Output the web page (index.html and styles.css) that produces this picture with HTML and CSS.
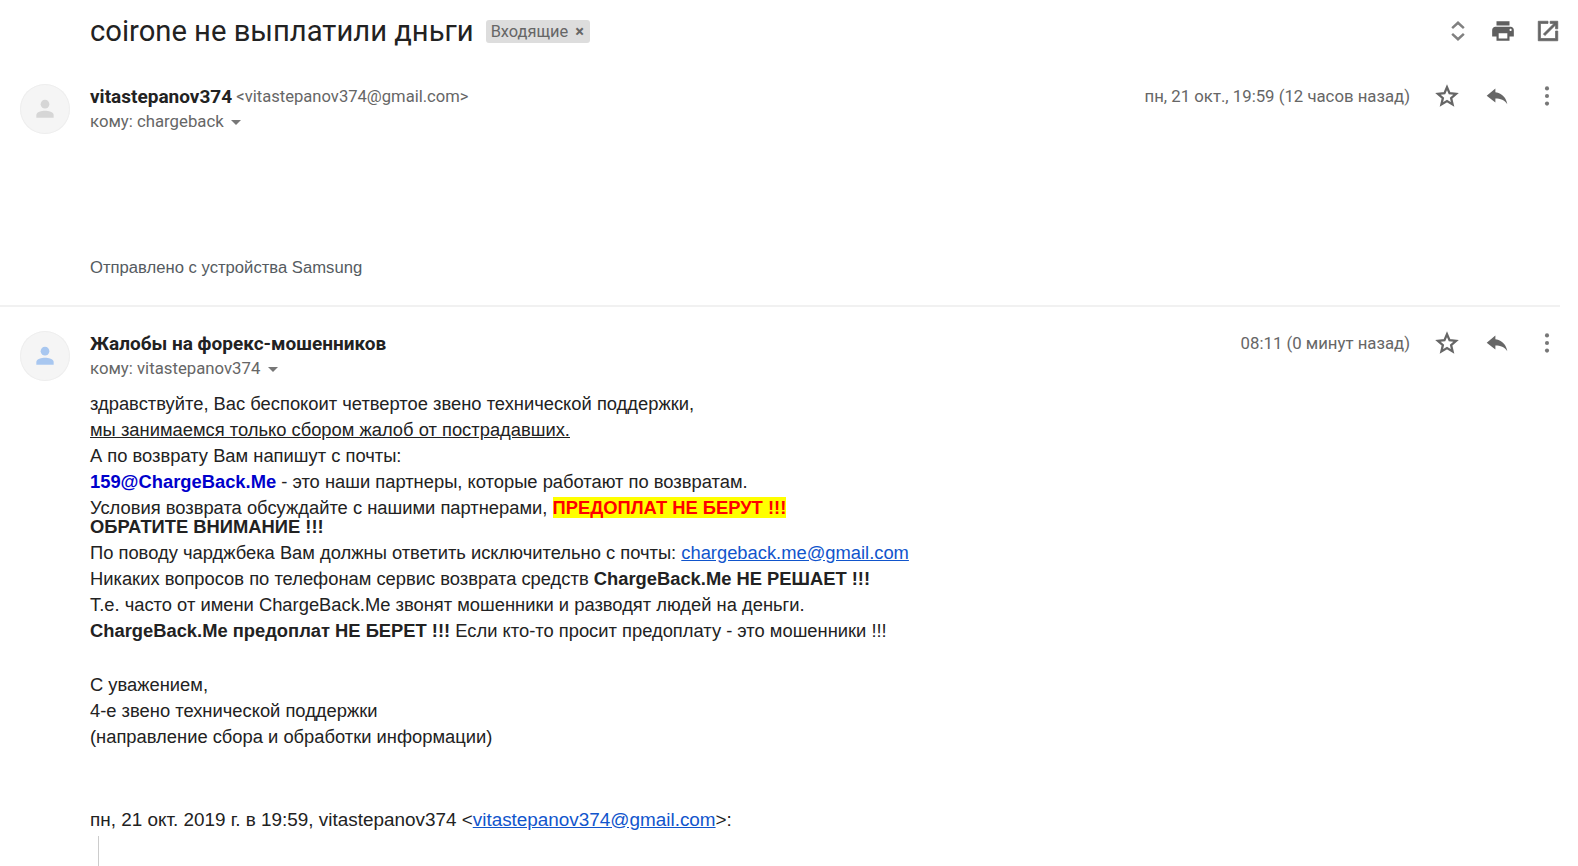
FILE: index.html
```html
<!DOCTYPE html>
<html lang="ru">
<head>
<meta charset="utf-8">
<title>coirone не выплатили дньги</title>
<link rel="stylesheet" href="styles.css">
</head>
<body>
<header class="subject-row">
  <div class="subject-main">
    <h1 class="subject">coirone не выплатили дньги</h1>
    <span class="label">Входящие <span class="label-x">×</span></span>
  </div>
  <div class="subject-actions">
    <svg class="icon" viewBox="0 0 24 24"><path d="M6.6 9.4 12 4.4l5.4 5M6.6 14.6l5.4 5 5.4-5" fill="none" stroke="#808080" stroke-width="2.3"/></svg>
    <svg class="icon" viewBox="0 0 24 24"><path fill="#5f5f5f" d="M19 8H5c-1.66 0-3 1.34-3 3v6h4v4h12v-4h4v-6c0-1.66-1.34-3-3-3zm-3 11H8v-5h8v5zm3-7c-.55 0-1-.45-1-1s.45-1 1-1 1 .45 1 1-.45 1-1 1zm-1-9H6v4h12V3z"/></svg>
    <svg class="icon" viewBox="0 0 24 24"><path fill="#666" stroke="#666" stroke-width=".7" d="M19 19H5V5h7V3H3v18h18v-9h-2v7zM14 3v2h3.59l-9.83 9.83 1.41 1.41L19 6.41V10h2V3h-7z"/></svg>
  </div>
</header>

<article class="message first">
  <div class="avatar">
    <svg viewBox="0 0 24 24"><circle cx="12" cy="7.5" r="4" fill="#d6d6d6"/><path fill="#d6d6d6" d="M4 20v-2.5C4 14.5 9 13.5 12 13.5s8 1 8 4V20z"/></svg>
  </div>
  <div class="message-main">
    <div class="meta">
      <div class="people">
        <div class="from"><strong class="name">vitastepanov374</strong> <span class="addr">&lt;vitastepanov374@gmail.com&gt;</span></div>
        <div class="to">кому: chargeback <span class="caret"></span></div>
      </div>
      <div class="date-actions">
        <span class="date">пн, 21 окт., 19:59 (12 часов назад)</span>
        <svg class="icon" viewBox="0 0 24 24"><path fill="none" stroke="#666" stroke-width="2.1" d="M12 3.9l2.35 5.55 6 .52-4.55 3.95 1.36 5.87L12 16.68l-5.16 3.11 1.36-5.87-4.55-3.95 6-.52z"/></svg>
        <svg class="icon" viewBox="0 0 24 24"><path fill="#666" d="M10.5 8.6V5L2.5 11.7l8 6.3v-3.7c4.700 0 8.500 1.500 11 5.200-.9-5.200-4.300-10-11-10.900z"/></svg>
        <svg class="icon" viewBox="0 0 24 24"><circle cx="12" cy="5" r="1.9" fill="#777"/><circle cx="12" cy="12" r="1.9" fill="#777"/><circle cx="12" cy="19" r="1.9" fill="#777"/></svg>
      </div>
    </div>
    <p class="signature">Отправлено с устройства Samsung</p>
  </div>
</article>

<article class="message second">
  <div class="avatar">
    <svg viewBox="0 0 24 24"><circle cx="12" cy="7.5" r="4" fill="#a8c7f0"/><path fill="#a8c7f0" d="M4 20v-2.5C4 14.5 9 13.5 12 13.5s8 1 8 4V20z"/></svg>
  </div>
  <div class="message-main">
    <div class="meta">
      <div class="people">
        <div class="from"><strong class="name">Жалобы на форекс-мошенников</strong></div>
        <div class="to">кому: vitastepanov374 <span class="caret"></span></div>
      </div>
      <div class="date-actions">
        <span class="date">08:11 (0 минут назад)</span>
        <svg class="icon" viewBox="0 0 24 24"><path fill="none" stroke="#666" stroke-width="2.1" d="M12 3.9l2.35 5.55 6 .52-4.55 3.95 1.36 5.87L12 16.68l-5.16 3.11 1.36-5.87-4.55-3.95 6-.52z"/></svg>
        <svg class="icon" viewBox="0 0 24 24"><path fill="#666" d="M10.5 8.6V5L2.5 11.7l8 6.3v-3.7c4.700 0 8.500 1.500 11 5.200-.9-5.200-4.300-10-11-10.900z"/></svg>
        <svg class="icon" viewBox="0 0 24 24"><circle cx="12" cy="5" r="1.9" fill="#777"/><circle cx="12" cy="12" r="1.9" fill="#777"/><circle cx="12" cy="19" r="1.9" fill="#777"/></svg>
      </div>
    </div>
    <div class="body">
      <div class="line">здравствуйте, Вас беспокоит четвертое звено технической поддержки,</div>
      <div class="line"><u>мы занимаемся только сбором жалоб от пострадавших.</u></div>
      <div class="line">А по возврату Вам напишут с почты:</div>
      <div class="line"><b class="blue">159@ChargeBack.Me</b> - это наши партнеры, которые работают по возвратам.</div>
      <div class="line">Условия возврата обсуждайте с нашими партнерами, <b class="alert">ПРЕДОПЛАТ НЕ БЕРУТ !!!</b></div>
      <div class="line tight"><b>ОБРАТИТЕ ВНИМАНИЕ !!!</b></div>
      <div class="line lifted">По поводу чарджбека Вам должны ответить исключительно с почты: <a href="#">chargeback.me@gmail.com</a></div>
      <div class="line">Никаких вопросов по телефонам сервис возврата средств <b>ChargeBack.Me НЕ РЕШАЕТ !!!</b></div>
      <div class="line">Т.е. часто от имени ChargeBack.Me звонят мошенники и разводят людей на деньги.</div>
      <div class="line"><b>ChargeBack.Me предоплат НЕ БЕРЕТ !!!</b> Если кто-то просит предоплату - это мошенники !!!</div>
      <div class="line blank"></div>
      <div class="line">С уважением,</div>
      <div class="line">4-е звено технической поддержки</div>
      <div class="line">(направление сбора и обработки информации)</div>
      <div class="line blank wide"></div>
      <div class="line blank wide"></div>
      <div class="line quote-head">пн, 21 окт. 2019 г. в 19:59, vitastepanov374 &lt;<a href="#">vitastepanov374@gmail.com</a>&gt;:</div>
      <blockquote class="quote"></blockquote>
    </div>
  </div>
</article>
</body>
</html>
```

FILE: styles.css
```css
html, body { margin: 0; padding: 0; height: 866px; overflow: hidden; background: #fff; }
body { font-family: Roboto, "Liberation Sans", sans-serif; color: #222; }

.subject-row { display: flex; justify-content: space-between; align-items: center; height: 62px; padding: 0 17px 0 90px; }
.subject-main { display: flex; align-items: center; gap: 12px; }
.subject { margin: 0; font-size: 29.2px; font-weight: 400; color: #222; }
.label { background: #ddd; color: #666; border-radius: 3px; font-size: 16.4px; padding: 2px 5px; line-height: 19px; }
.label-x { color: #666; font-weight: 700; margin-left: 3px; margin-right: 1px; }
.subject-actions { display: flex; gap: 19px; align-items: center; }
.icon { width: 26px; height: 26px; display: block; flex: none; }

.message { display: flex; padding: 21px 0 0 20px; }
.first { height: 222px; border-bottom: 2px solid #f1f1f1; margin-right: 18px; }
.second { padding-top: 23px; margin-right: 18px; }
.avatar { width: 50px; height: 50px; border-radius: 50%; background: #f5f5f5; box-shadow: inset 0 0 0 1px #eee; display: flex; align-items: center; justify-content: center; flex: none; margin-top: 1px; }
.avatar svg { width: 26px; height: 26px; }
.message-main { flex: 1; margin-left: 20px; min-width: 0; }
.meta { display: flex; justify-content: space-between; align-items: flex-start; height: 50px; }
.from { font-size: 16.6px; line-height: 26px; padding-top: 1px; }
.name { font-size: 19px; font-weight: 700; color: #222; }
.addr { color: #666; vertical-align: 1px; }
.to { font-size: 16.75px; line-height: 20px; color: #666; }
.caret { display: inline-block; width: 0; height: 0; border: 5px solid transparent; border-top-color: #777; border-bottom: 0; margin-left: 3px; vertical-align: middle; }
.date-actions { display: flex; align-items: center; gap: 24px; height: 26px; }
.date { font-size: 16.75px; color: #666; }
.signature { margin: 123px 0 0; font-family: "Liberation Sans", Arial, sans-serif; font-size: 16.65px; line-height: 24px; color: #555b61; }

.body { font-family: "Liberation Sans", Arial, sans-serif; font-size: 18.35px; color: #222; margin-top: 11px; }
.line { height: 26.1px; line-height: 26px; white-space: nowrap; }
.tight { margin-top: -7px; }
.lifted { margin-top: -1px; }
.blank { height: 28px; }
.wide { height: 28.2px; }
.quote-head { font-size: 18.9px; }
.blue { color: #00c; }
.alert { color: #f00; background: #ff0; }
.body a { color: #15c; text-decoration: underline; }
.quote { margin: 3px 0 0 8px; border-left: 1px solid #ccc; height: 60px; }
```
